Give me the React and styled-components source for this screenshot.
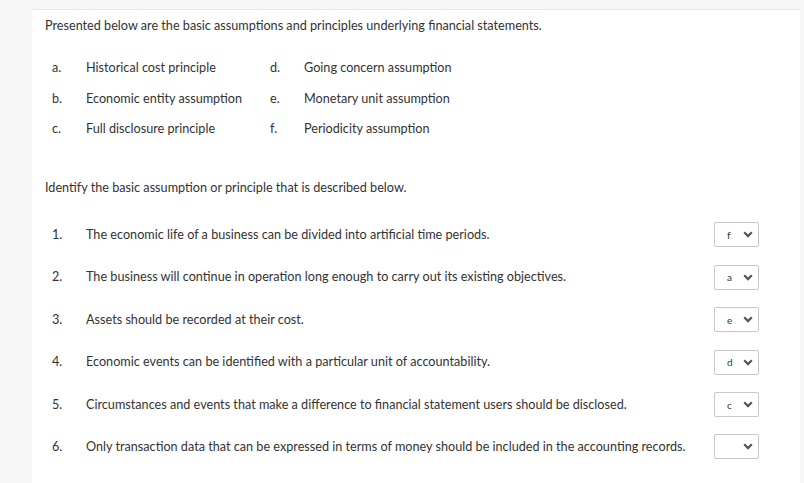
import styled, { createGlobalStyle } from "styled-components";

const GlobalStyle = createGlobalStyle`
  html, body {
    margin: 0;
    padding: 0;
    background: #f7f7f7;
  }
  body {
    font-family: Lato, "Open Sans", sans-serif;
    color: #333;
    font-size: 12.65px;
  }
`;

const Page = styled.div`
  padding: 9px 4px 0 32px;
  min-height: 483px;
  box-sizing: border-box;
`;

const Panel = styled.div`
  background: #fff;
  border-top: 1px solid #e6e6e6;
  padding: 8px 41px 20px 13px;
  min-height: 474px;
  box-sizing: border-box;
`;

const Para = styled.p`
  margin: 0;
  line-height: 16px;
`;

const Options = styled.div`
  display: grid;
  grid-template-columns: 34px 184px 34px auto;
  grid-auto-rows: 30.5px;
  align-items: center;
  margin: 18.75px 0 35.75px 7px;
`;

const Label = styled.span`
  line-height: 16px;
`;

const Items = styled.div`
  display: grid;
  grid-template-columns: 34px 1fr 45px;
  grid-auto-rows: 42.4px;
  align-items: center;
  margin: 17.8px 0 0 7px;
`;

const SelectBox = styled.div`
  width: 45px;
  height: 25px;
  box-sizing: border-box;
  border: 1px solid #c8c8c8;
  border-radius: 2px;
  display: flex;
  align-items: center;
  padding: 0 5px 0 12px;
  font-size: 10px;
  color: #333;
`;

const SelectValue = styled.span`
  flex: 1;
`;

const Chevron = () => (
  <svg width="10" height="7" viewBox="0 0 10 7">
    <polyline points="1.2,1.3 5,5.1 8.8,1.3" fill="none" stroke="#555" strokeWidth="2.2" />
  </svg>
);

const options = [
  ["a.", "Historical cost principle", "d.", "Going concern assumption"],
  ["b.", "Economic entity assumption", "e.", "Monetary unit assumption"],
  ["c.", "Full disclosure principle", "f.", "Periodicity assumption"],
];

const items = [
  ["The economic life of a business can be divided into artificial time periods.", "f"],
  ["The business will continue in operation long enough to carry out its existing objectives.", "a"],
  ["Assets should be recorded at their cost.", "e"],
  ["Economic events can be identified with a particular unit of accountability.", "d"],
  ["Circumstances and events that make a difference to financial statement users should be disclosed.", "c"],
  ["Only transaction data that can be expressed in terms of money should be included in the accounting records.", ""],
];

export default function App() {
  return (
    <>
      <GlobalStyle />
      <Page>
        <Panel>
          <Para>Presented below are the basic assumptions and principles underlying financial statements.</Para>
          <Options>
            {options.map((row) => row.map((cell, i) => <Label key={row[0] + i}>{cell}</Label>))}
          </Options>
          <Para>Identify the basic assumption or principle that is described below.</Para>
          <Items>
            {items.map(([text, value], i) => [
              <Label key={"n" + i}>{i + 1}.</Label>,
              <Label key={"t" + i}>{text}</Label>,
              <SelectBox key={"s" + i}>
                <SelectValue>{value}</SelectValue>
                <Chevron />
              </SelectBox>,
            ])}
          </Items>
        </Panel>
      </Page>
    </>
  );
}
